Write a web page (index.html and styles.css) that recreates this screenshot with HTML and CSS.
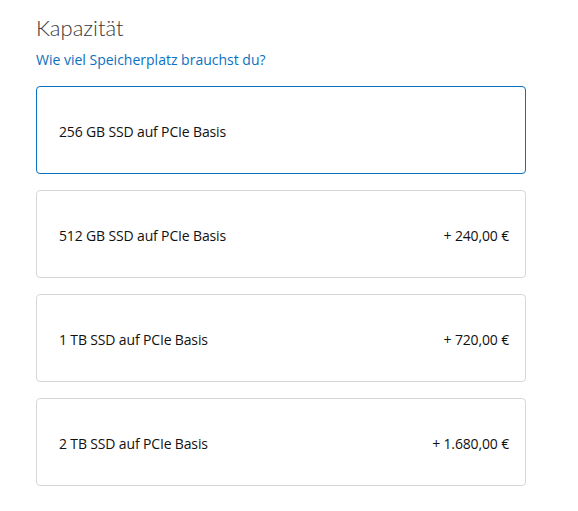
FILE: index.html
```html
<!DOCTYPE html>
<html lang="de">
<head>
<meta charset="utf-8">
<link rel="stylesheet" href="styles.css">
</head>
<body>
<div class="page">
  <h2 class="title">Kapazität</h2>
  <p class="subtitle">Wie viel Speicherplatz brauchst du?</p>
  <div class="options">
    <div class="option selected"><span class="label">256 GB SSD auf PCIe Basis</span></div>
    <div class="option"><span class="label">512 GB SSD auf PCIe Basis</span><span class="price">+ 240,00 €</span></div>
    <div class="option"><span class="label">1 TB SSD auf PCIe Basis</span><span class="price">+ 720,00 €</span></div>
    <div class="option"><span class="label">2 TB SSD auf PCIe Basis</span><span class="price">+ 1.680,00 €</span></div>
  </div>
</div>
</body>
</html>
```
FILE: styles.css
```css
html, body { margin: 0; padding: 0; background: #fff; }
body { font-family: "Open Sans", "Noto Sans", sans-serif; color: #111; }
.page { width: 490px; padding: 14px 0 0 36px; }
.title { margin: 0; font-family: Lato, "Open Sans", sans-serif; font-size: 22px; font-weight: 300; color: #3a3a3a; line-height: 28px; }
.subtitle { margin: 8px 0 0; font-size: 14px; color: #0a70c0; line-height: 20px; }
.options { margin-top: 16px; display: flex; flex-direction: column; gap: 16px; }
.option { height: 84px; border: 1px solid #d6d6d6; border-radius: 4px; display: flex; align-items: center; justify-content: space-between; padding: 2px 16px 0 22px; box-sizing: content-box; font-size: 14px; letter-spacing: -0.15px; }
.option.selected { border-color: #0a70c0; }
```
